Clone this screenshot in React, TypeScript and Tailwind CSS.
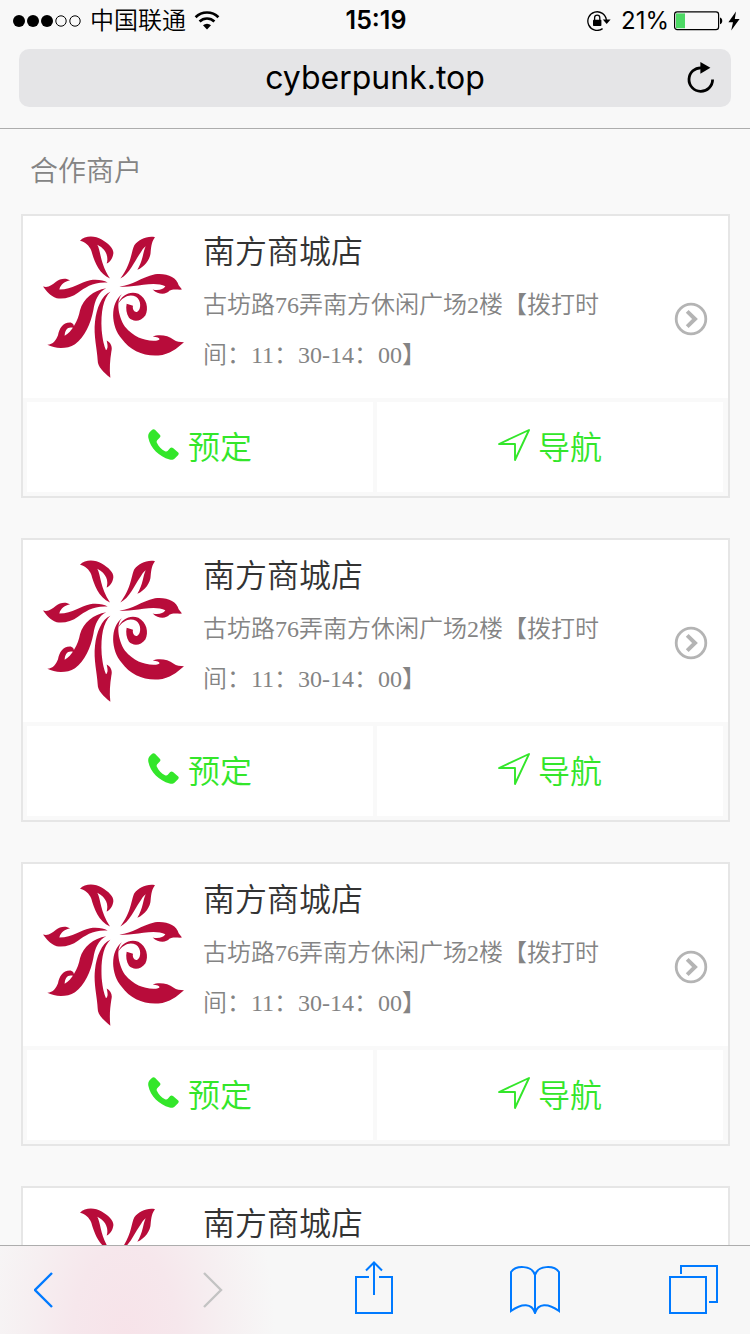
import React from 'react';

type Shop = { id: number; name: string; address: string };

const shops: Shop[] = [1, 2, 3, 4].map((id) => ({
  id,
  name: '南方商城店',
  address: '古坊路76弄南方休闲广场2楼【拨打时间：11：30-14：00】',
}));

function SignalDots() {
  return (
    <svg width="70" height="14" viewBox="0 0 70 14" aria-hidden="true">
      <circle cx="7" cy="7" r="6" />
      <circle cx="21" cy="7" r="6" />
      <circle cx="35" cy="7" r="6" />
      <circle cx="49" cy="7" r="5.2" fill="none" stroke="black" strokeWidth="1" />
      <circle cx="63" cy="7" r="5.2" fill="none" stroke="black" strokeWidth="1" />
    </svg>
  );
}

function WifiIcon() {
  return (
    <svg width="26" height="20" viewBox="0 0 26 20" fill="none" stroke="black" strokeWidth="2.7" aria-hidden="true">
      <path d="M1.6 6.2a16.2 16.2 0 0 1 22.8 0" />
      <path d="M5.6 10.5a10.6 10.6 0 0 1 14.8 0" />
      <path d="M13 18.400l-4-4.100a5.700 5.700 0 0 1 8 0z" fill="black" stroke="none" />
    </svg>
  );
}

function RotationLockIcon() {
  return (
    <svg width="24" height="20" viewBox="0 0 24 20" fill="none" stroke="black" aria-hidden="true">
      <path d="M15.6 17.6A9.3 9.3 0 1 1 19.4 9.2" strokeWidth="1.3" />
      <path d="M15.8 8.4h7.8L19.7 13z" fill="black" stroke="none" />
      <rect x="6" y="8.8" width="8.4" height="6.2" rx="0.8" fill="black" stroke="none" />
      <path d="M7.6 9V6.8a2.6 2.6 0 0 1 5.2 0V9" strokeWidth="1.3" />
    </svg>
  );
}

function BatteryIcon() {
  return (
    <svg width="50" height="20" viewBox="0 0 50 20" aria-hidden="true">
      <rect x="0.6" y="0.9" width="44" height="17.8" rx="2.6" fill="none" stroke="black" strokeWidth="1.2" />
      <rect x="2" y="2.4" width="9" height="14.8" fill="#4cd964" />
      <path d="M46 6.4c3 .6 3 6.2 0 6.8z" />
    </svg>
  );
}

function BoltIcon() {
  return (
    <svg width="12" height="20" viewBox="0 0 12 20" aria-hidden="true">
      <path d="M8 0.6L0.4 11.2H5L3.2 19.4 11.6 8H6.8z" />
    </svg>
  );
}

function ReloadIcon() {
  return (
    <svg width="28" height="32" viewBox="0 0 28 32" aria-hidden="true">
      <path d="M25.6 17.6A11.8 11.8 0 1 1 14.5 5.8" fill="none" stroke="black" strokeWidth="2.8" />
      <path d="M13.4 0L23.4 5.8 13.4 11.8z" />
    </svg>
  );
}

function FlowerLogo() {
  return (
    <svg className="mb-[2px] h-[143px] w-[141px] shrink-0" viewBox="39 45 423 428" fill="#b80c3a" role="img" aria-label="店铺标志">
      <path d="M150 62C165 45 195 46 215 58C235 70 252 85 250 100C248 115 240 126 230 130C236 112 230 88 202 74C213 95 210 130 240 175C205 160 192 120 184 92C178 76 165 66 150 62Z" />
      <path d="M375 51C350 46 325 60 313 75C303 95 305 130 271 175C300 160 312 125 330 100C335 92 338 85 347 78C338 98 340 118 322 149C345 140 362 115 362 95C364 75 366 62 375 51Z" />
      <path d="M39 199C55 204 65 195 78 185C90 175 108 172 120 181C105 183 92 192 88 208C130 208 150 185 180 180C205 177 220 181 233 187C190 184 165 202 145 217C125 232 100 238 80 234C60 227 50 214 39 199Z" />
      <path d="M268 199C310 195 330 172 375 162C410 158 440 170 446 195L456 208C445 210 430 204 418 212C410 223 385 225 368 208C385 212 400 208 406 198C390 190 365 190 340 194C315 198 290 201 268 199Z" />
      <path d="M229 204C205 215 195 240 190 270C182 310 165 350 135 372C110 388 75 386 52 374C70 372 78 360 84 345C88 325 98 306 122 307C131 310 134 316 130 323C114 318 105 327 104 347C125 335 145 300 150 270C160 235 190 210 229 204Z" />
      <path d="M241 215C220 235 212 275 215 330C218 360 222 375 228 390C236 385 232 370 230 361C243 368 248 380 244 395C240 420 238 445 241 473C220 455 203 440 203 420C202 390 190 345 195 305C199 265 215 226 241 215Z" />
      <path d="M278 221C258 235 262 285 285 320C310 350 340 361 370 362C395 362 395 352 368 349C385 342 415 345 430 358C440 365 450 366 462 366C440 385 420 402 385 406C340 409 300 391 275 356C243 320 238 248 278 221Z" />
      <path d="M264 251C275 225 300 211 325 221C350 234 357 265 346 286C332 306 308 305 297 293C289 280 287 265 290 251L309 257C306 268 314 278 322 275C334 268 334 240 318 230C300 220 280 228 264 251Z" />
    </svg>
  );
}

function CircleArrowIcon() {
  return (
    <svg width="34" height="34" viewBox="0 0 34 34" fill="none" stroke="#b4b4b4" className="shrink-0" aria-hidden="true">
      <circle cx="17" cy="17" r="14.8" strokeWidth="2.8" />
      <path d="M13.2 9.4L21 17l-7.8 7.6" strokeWidth="4" />
    </svg>
  );
}

function PhoneIcon() {
  return (
    <svg width="32" height="32" viewBox="0 0 32 32" fill="#33e62a" className="mb-[6px]" aria-hidden="true">
      <path d="M0.4 5.4C0.9 3.6 3 1.600 4.600 0.500Q5.800 -0.200 7 0.800L12 6Q13 7.400 11.600 8.800L9.200 11.200Q8.200 12.400 9 14C10.600 17.400 13.400 20.400 17 22.200Q18.600 23 19.800 21.800L22.200 19Q23.600 17.800 25 19L30.200 23.600Q31.200 24.800 30.200 26C28.600 27.800 27 29.600 25.200 30.600Q23.600 31 21.600 30.600C11 27.600 2.400 19 0.400 9Q0 7.400 0.400 5.400Z" />
    </svg>
  );
}

function NavigateIcon() {
  return (
    <svg width="32" height="32" viewBox="0 0 32 32" fill="none" stroke="#33e62a" strokeWidth="1.9" strokeLinejoin="round" className="mb-[6px]" aria-hidden="true">
      <path d="M1 15L31 1 17 31V15z" />
    </svg>
  );
}

function ActionButton({ icon, label }: { icon: React.ReactNode; label: string }) {
  return (
    <button
      type="button"
      className="flex h-[90px] flex-1 items-center justify-center gap-2 bg-white pt-[2px] text-[32px] font-[350] leading-[48px] text-[#33e62a]"
    >
      {icon}
      {label}
    </button>
  );
}

function ShopCard({ shop }: { shop: Shop }) {
  return (
    <article className="border-2 border-[#e6e6e6] bg-white">
      <a href="#shop" className="flex h-[182px] items-center px-5">
        <FlowerLogo />
        <div className="ml-[19px] h-full min-w-0 flex-1 pt-2">
          <h2 className="text-[32px] font-[350] leading-[56px] text-[#333]">{shop.name}</h2>
          <p className="max-w-[410px] font-['Liberation_Serif','Noto_Sans_CJK_SC',serif] text-2xl font-[350] leading-[50px] text-[#848484]">
            {shop.address}
          </p>
        </div>
        <span className="pt-6">
          <CircleArrowIcon />
        </span>
      </a>
      <div className="flex gap-1 bg-[#f9f9f9] p-1 pr-[5px]">
        <ActionButton icon={<PhoneIcon />} label="预定" />
        <ActionButton icon={<NavigateIcon />} label="导航" />
      </div>
    </article>
  );
}

function BrowserHeader() {
  return (
    <header className="shrink-0 border-b border-[#adadad] bg-[#f8f8f8] pb-[21px]">
      <div className="grid h-[41px] grid-cols-[1fr_auto_1fr] items-center pl-3 pr-[10px] text-2xl text-black">
        <div className="flex items-center">
          <SignalDots />
          <span className="mx-2 font-[350]">中国联通</span>
          <WifiIcon />
        </div>
        <time className="text-[25px] font-semibold">15:19</time>
        <div className="flex items-center justify-end">
          <RotationLockIcon />
          <span className="ml-[10px] mr-[5px]">21%</span>
          <BatteryIcon />
          <span className="ml-1">
            <BoltIcon />
          </span>
        </div>
      </div>
      <div className="mx-[19px] mt-2 grid h-[58px] grid-cols-[60px_1fr_60px] items-center rounded-[10px] bg-[#e5e5e7]">
        <input
          type="text"
          aria-label="网址"
          defaultValue="cyberpunk.top"
          className="col-start-2 w-full min-w-0 bg-transparent text-center text-[32px] leading-[48px] text-black outline-none"
        />
        <button type="button" aria-label="重新载入" className="flex justify-center">
          <ReloadIcon />
        </button>
      </div>
    </header>
  );
}

function BrowserToolbar() {
  return (
    <nav
      aria-label="浏览器工具栏"
      className="grid h-[89px] shrink-0 grid-cols-[169fr_153fr_155fr_159fr_49fr] items-center justify-items-start border-t border-[#adadad] bg-[#f7f7f7] bg-[radial-gradient(ellipse_150px_260px_at_125px_90px,#f7e3e9_0%,#f6e7ec_35%,#f6eff1_65%,#f7f7f7_100%)] pl-[34px] pr-[31px] text-[#007aff]"
    >
      <button type="button" aria-label="后退">
        <svg width="20" height="36" viewBox="0 0 20 36" fill="none" stroke="currentColor" strokeWidth="2.4">
          <path d="M18 1L1 18l17 17" />
        </svg>
      </button>
      <button type="button" aria-label="前进" disabled className="text-[#c3c3c3]">
        <svg width="20" height="36" viewBox="0 0 20 36" fill="none" stroke="currentColor" strokeWidth="2.4">
          <path d="M1 1l17 17L1 35" />
        </svg>
      </button>
      <button type="button" aria-label="分享">
        <svg width="38" height="58" viewBox="0 0 38 58" fill="none" stroke="currentColor" strokeWidth="2">
          <path d="M14 16H1v36h36V16H24" />
          <path d="M19 34V2M11 9.5L19 1.5l8 8" />
        </svg>
      </button>
      <button type="button" aria-label="书签">
        <svg width="50" height="48" viewBox="0 0 50 48" fill="none" stroke="currentColor" strokeWidth="2">
          <path d="M25 47V9C22-1 6-1 1 6V45C12 37 22 37 25 47C28 37 38 37 49 45V6C44-1 28-1 25 9" />
        </svg>
      </button>
      <button type="button" aria-label="标签页">
        <svg width="50" height="50" viewBox="0 0 50 50" fill="none" stroke="currentColor" strokeWidth="2">
          <path d="M1 12h36v36H1z" />
          <path d="M12 9V1h36v36h-8" />
        </svg>
      </button>
    </nav>
  );
}

export default function App() {
  return (
    <div className="flex h-screen flex-col bg-[#f9f9f9] font-[Inter,'Noto_Sans_CJK_SC',sans-serif]">
      <BrowserHeader />
      <main className="min-h-0 flex-1 overflow-y-auto [scrollbar-width:none]">
        <h1 className="px-[30px] pb-[22px] pt-[22px] text-[28px] font-[350] leading-[41px] text-[#848484]">合作商户</h1>
        <div className="flex flex-col gap-10 pb-10 pl-[21px] pr-5">
          {shops.map((shop) => (
            <ShopCard key={shop.id} shop={shop} />
          ))}
        </div>
      </main>
      <BrowserToolbar />
    </div>
  );
}
